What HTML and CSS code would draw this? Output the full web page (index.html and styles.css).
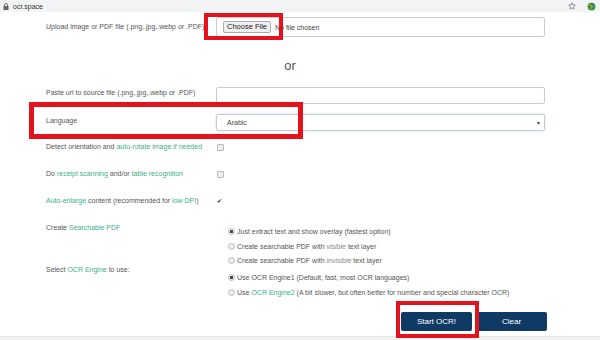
FILE: index.html
```html
<!DOCTYPE html>
<html lang="en">
<head>
  <meta charset="UTF-8">
  <title>ocr.space</title>
  <link rel="stylesheet" href="styles.css">
</head>
<body>
  <!-- barre d'adresse -->
  <div class="topbar">
    <svg class="lock" width="6" height="7" viewBox="0 0 6 7"><path d="M1.5 3V2a1.5 1.5 0 0 1 3 0v1" fill="none" stroke="#666" stroke-width="0.9"/><rect x="0.5" y="3" width="5" height="4" fill="#666"/></svg>
    <span class="url">ocr.space</span>
    <span class="spacer"></span>
    <svg class="star" width="8" height="8" viewBox="0 0 10 10"><path d="M5 .8l1.2 2.8 3 .3-2.3 2 .7 3L5 7.3 2.4 8.9l.7-3-2.3-2 3-.3z" fill="none" stroke="#666" stroke-width="0.8"/></svg>
    <svg class="ext" width="9" height="9" viewBox="0 0 10 10"><circle cx="5" cy="5" r="4.3" fill="#2f8f3a"/><path d="M2 3.5c1 .3 1.5-.6 2.3-.2.6.4 0 1.3.9 1.7.8.3 1.3-.5 2.3.1M3.5 7.5c.5-1 1.6-.6 2.2-1.4" fill="none" stroke="#e0b324" stroke-width="1.1"/><circle cx="6.8" cy="2.8" r="1" fill="#3a6fd0"/></svg>
  </div>

  <div class="form">
    <div class="row row-upload">
      <div class="label">Upload image or PDF file (.png,.jpg,.webp or .PDF)</div>
      <div class="control">
        <div class="file-box"><span class="file-btn">Choose File</span><span class="file-name">No file chosen</span></div>
      </div>
    </div>

    <div class="or">or</div>

    <div class="row row-field">
      <div class="label">Paste url to source file (.png,.jpg,.webp or .PDF)</div>
      <div class="control"><div class="input"></div></div>
    </div>

    <div class="row row-field row-lang">
      <div class="label">Language</div>
      <div class="control"><div class="input select"><span>Arabic</span><span class="caret">▾</span></div></div>
    </div>

    <div class="row row-check">
      <div class="label">Detect orientation and <a>auto-rotate image if needed</a></div>
      <div class="control"><span class="check"></span></div>
    </div>

    <div class="row row-check">
      <div class="label">Do <a>receipt scanning</a> and/or <a>table recognition</a></div>
      <div class="control"><span class="check"></span></div>
    </div>

    <div class="row row-check">
      <div class="label"><a>Auto-enlarge</a> content (recommended for <a>low DPI</a>)</div>
      <div class="control"><span class="check checked">✔</span></div>
    </div>

    <div class="row row-radio">
      <div class="label">Create <a>Searchable PDF</a></div>
      <div class="control radios">
        <div class="opt"><span class="radio on"></span><span>Just extract text and show overlay (fastest option)</span></div>
        <div class="opt"><span class="radio"></span><span>Create searchable PDF with <i>visible</i> text layer</span></div>
        <div class="opt"><span class="radio"></span><span>Create searchable PDF with <i>invisible</i> text layer</span></div>
      </div>
    </div>

    <div class="row row-radio row-engine">
      <div class="label">Select <a>OCR Engine</a> to use:</div>
      <div class="control radios">
        <div class="opt"><span class="radio on"></span><span>Use OCR Engine1 (Default, fast, most OCR languages)</span></div>
        <div class="opt"><span class="radio"></span><span>Use <a>OCR Engine2</a> (A bit slower, but often better for number and special character OCR)</span></div>
      </div>
    </div>

    <div class="buttons">
      <button class="btn">Start OCR!</button>
      <button class="btn">Clear</button>
    </div>
  </div>

  <div class="bottom"></div>

  <!-- cadres rouges d'annotation -->
  <div class="mark mark-file"></div>
  <div class="mark mark-lang"></div>
  <div class="mark mark-start"></div>
</body>
</html>
```

FILE: styles.css
```css
body {
  margin: 0;
  width: 600px;
  height: 340px;
  overflow: hidden;
  position: relative;
  background: #fff;
  font-family: "Liberation Sans", Arial, sans-serif;
  color: #555;
}

.topbar {
  height: 12px;
  background: #f1f3f4;
  display: flex;
  align-items: center;
  padding: 0 4px 0 3px;
  font-size: 7px;
  color: #333;
}

.topbar .url {
  margin-left: 4px;
}

.topbar .spacer {
  flex: 1;
}

.topbar .star {
  margin-right: 11px;
}

.form {
  padding-top: 5px;
}

.row {
  display: flex;
  align-items: flex-start;
}

.label {
  width: 170px;
  padding-left: 46px;
  font-size: 7px;
  line-height: 12px;
  color: #555;
  white-space: nowrap;
}

.label a,
.opt a {
  color: #3bb08a;
}

.control {
  width: 329px;
}

/* ligne d'upload */
.row-upload .label {
  line-height: 20px;
}

.file-box {
  height: 18px;
  border: 1px solid #ccc;
  border-radius: 2px;
  display: flex;
  align-items: center;
  padding-left: 6px;
  font-size: 7px;
}

.file-btn {
  border: 1px solid #aaa;
  border-radius: 2px;
  background: #efefef;
  color: #222;
  font-size: 7.5px;
  padding: 1px 3px;
  line-height: 8px;
}

.file-name {
  margin-left: 4px;
  color: #444;
}

.or {
  margin: 22px 0 14px;
  text-align: center;
  padding-right: 20px;
  font-size: 13px;
  line-height: 14px;
  color: #555;
}

.row-field .control .input {
  height: 15px;
  border: 1px solid #ccc;
  border-radius: 2px;
}

.row-lang {
  margin-top: 10px;
}

.row-lang .label {
  line-height: 14px;
}

.select {
  display: flex;
  align-items: center;
  justify-content: space-between;
  padding: 0 4px 0 10px;
  font-size: 7px;
  color: #444;
}

.row-lang .select {
  border-color: #8fc3ec;
  box-shadow: 0 0 2px rgba(102, 175, 233, 0.5);
}

.caret {
  font-size: 6px;
}

.row-check {
  margin-top: 10px;
}

.row-check + .row-check {
  margin-top: 15px;
}

.row-check .control {
  height: 12px;
  display: flex;
  align-items: center;
}

.check {
  width: 5px;
  height: 5px;
  margin-left: 1px;
  border: 1px solid #bbb;
  border-radius: 1px;
  background: #eee;
}

.check.checked {
  border: none;
  background: none;
  width: 7px;
  height: 7px;
  font-size: 6px;
  line-height: 7px;
  color: #222;
}

.row-radio {
  margin-top: 15px;
}

.radios {
  padding-top: 2px;
}

.opt {
  height: 14.7px;
  display: flex;
  align-items: center;
  padding-left: 12px;
  font-size: 7px;
  color: #555;
  white-space: nowrap;
}

.opt i {
  color: #888;
}

.radio {
  width: 5px;
  height: 5px;
  border: 1px solid #bbb;
  border-radius: 50%;
  background: #eee;
  margin-right: 2px;
  flex: none;
}

.radio.on {
  background: radial-gradient(circle, #444 0 1.4px, #eee 1.6px);
}

.row-engine {
  margin-top: 0;
}

.row-engine .label {
  margin-top: -4px;
}

.buttons {
  display: flex;
  justify-content: flex-end;
  gap: 4px;
  width: 547px;
  margin-top: 13px;
}

.btn {
  width: 71px;
  height: 19px;
  border: none;
  border-radius: 2px;
  background: #0f3a64;
  color: #fff;
  font-family: "Liberation Sans", Arial, sans-serif;
  font-size: 8px;
  padding: 0;
}

.bottom {
  position: absolute;
  left: 0;
  right: 0;
  bottom: 0;
  height: 3px;
  background: #f2f2f2;
  border-top: 1px solid #e6e6e6;
}

.mark {
  position: absolute;
  border: 4px solid #e3121c;
  box-sizing: border-box;
}

.mark-file {
  left: 204px;
  top: 13px;
  width: 79px;
  height: 27px;
}

.mark-lang {
  left: 29px;
  top: 102px;
  width: 274px;
  height: 37px;
  border-width: 5px;
}

.mark-start {
  left: 396px;
  top: 301px;
  width: 83px;
  height: 37px;
}
```
